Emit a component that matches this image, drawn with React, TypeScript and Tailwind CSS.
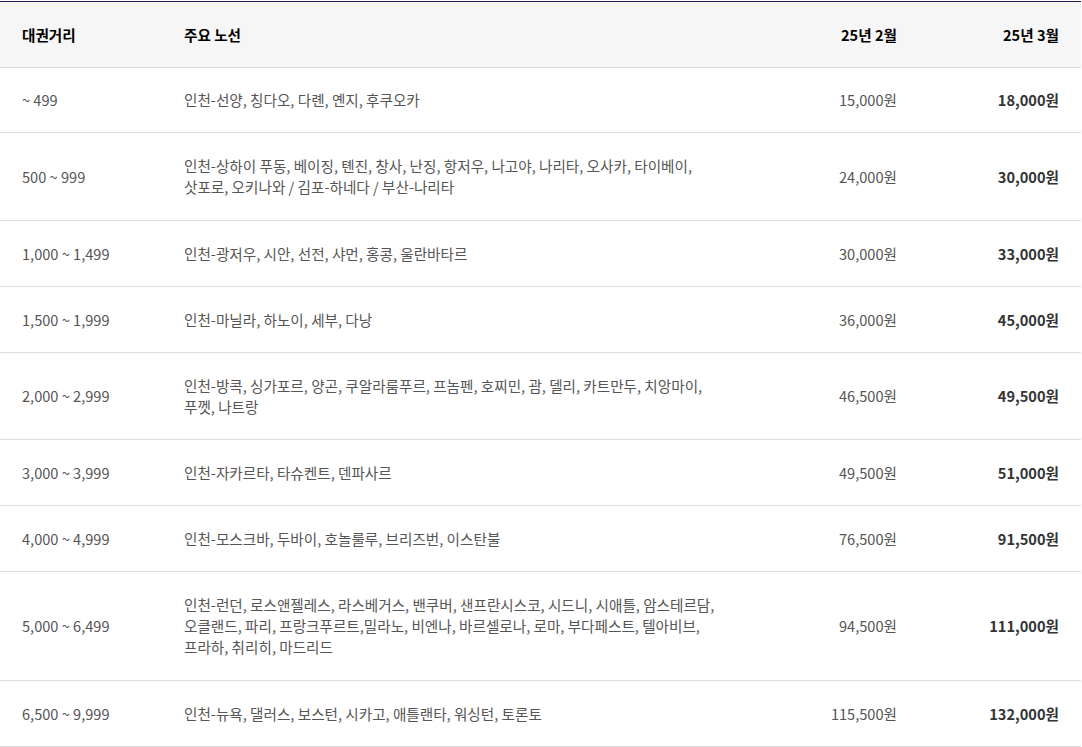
const rows = [
  { dist: "~ 499", routes: ["인천-선양, 칭다오, 다롄, 옌지, 후쿠오카"], feb: "15,000원", mar: "18,000원", h: "h-[65px]" },
  {
    dist: "500 ~ 999",
    routes: [
      "인천-상하이 푸동, 베이징, 톈진, 창사, 난징, 항저우, 나고야, 나리타, 오사카, 타이베이,",
      "삿포로, 오키나와 / 김포-하네다 / 부산-나리타",
    ],
    feb: "24,000원",
    mar: "30,000원",
    h: "h-[88px]",
  },
  { dist: "1,000 ~ 1,499", routes: ["인천-광저우, 시안, 선전, 샤먼, 홍콩, 울란바타르"], feb: "30,000원", mar: "33,000원", h: "h-[66px]" },
  { dist: "1,500 ~ 1,999", routes: ["인천-마닐라, 하노이, 세부, 다낭"], feb: "36,000원", mar: "45,000원", h: "h-[66px]" },
  {
    dist: "2,000 ~ 2,999",
    routes: ["인천-방콕, 싱가포르, 양곤, 쿠알라룸푸르, 프놈펜, 호찌민, 괌, 델리, 카트만두, 치앙마이,", "푸껫, 나트랑"],
    feb: "46,500원",
    mar: "49,500원",
    h: "h-[87px]",
  },
  { dist: "3,000 ~ 3,999", routes: ["인천-자카르타, 타슈켄트, 덴파사르"], feb: "49,500원", mar: "51,000원", h: "h-[66px]" },
  { dist: "4,000 ~ 4,999", routes: ["인천-모스크바, 두바이, 호놀룰루, 브리즈번, 이스탄불"], feb: "76,500원", mar: "91,500원", h: "h-[66px]" },
  {
    dist: "5,000 ~ 6,499",
    routes: [
      "인천-런던, 로스앤젤레스, 라스베거스, 밴쿠버, 샌프란시스코, 시드니, 시애틀, 암스테르담,",
      "오클랜드, 파리, 프랑크푸르트,밀라노, 비엔나, 바르셀로나, 로마, 부다페스트, 텔아비브,",
      "프라하, 취리히, 마드리드",
    ],
    feb: "94,500원",
    mar: "111,000원",
    h: "h-[109px]",
  },
  { dist: "6,500 ~ 9,999", routes: ["인천-뉴욕, 댈러스, 보스턴, 시카고, 애틀랜타, 워싱턴, 토론토"], feb: "115,500원", mar: "132,000원", h: "h-[66px]" },
];

export default function App() {
  return (
    <div className="bg-white min-h-screen pt-px" style={{ fontFamily: '"Noto Sans CJK KR", "Noto Sans", sans-serif' }}>
      <table className="w-[1081px] table-fixed border-collapse border-t border-[#1b1d5c] text-[14.6px] leading-[21px]">
        <colgroup>
          <col className="w-[162px]" />
          <col className="w-[557px]" />
          <col className="w-[200px]" />
          <col className="w-[162px]" />
        </colgroup>
        <thead>
          <tr className="bg-[#f6f6f6] border-b border-[#dcdcdc] text-black leading-[21.5px]">
            <th className="py-[21.5px] pl-[22px] text-left font-bold">대권거리</th>
            <th className="py-[21.5px] pl-[22px] text-left font-bold">주요 노선</th>
            <th className="py-[21.5px] pr-[22px] text-right font-bold">25년 2월</th>
            <th className="py-[21.5px] pr-[22px] text-right font-bold">25년 3월</th>
          </tr>
        </thead>
        <tbody>
          {rows.map((r) => (
            <tr key={r.dist} className={`${r.h} border-b border-[#dcdcdc] text-[#555]`}>
              <td className="pl-[22px] align-middle">{r.dist}</td>
              <td className="pl-[22px] align-middle">
                {r.routes.map((line, i) => (
                  <div key={i} className="whitespace-nowrap">{line}</div>
                ))}
              </td>
              <td className="pr-[22px] text-right align-middle">{r.feb}</td>
              <td className="pr-[22px] text-right align-middle font-bold text-[#333]">{r.mar}</td>
            </tr>
          ))}
        </tbody>
      </table>
    </div>
  );
}
